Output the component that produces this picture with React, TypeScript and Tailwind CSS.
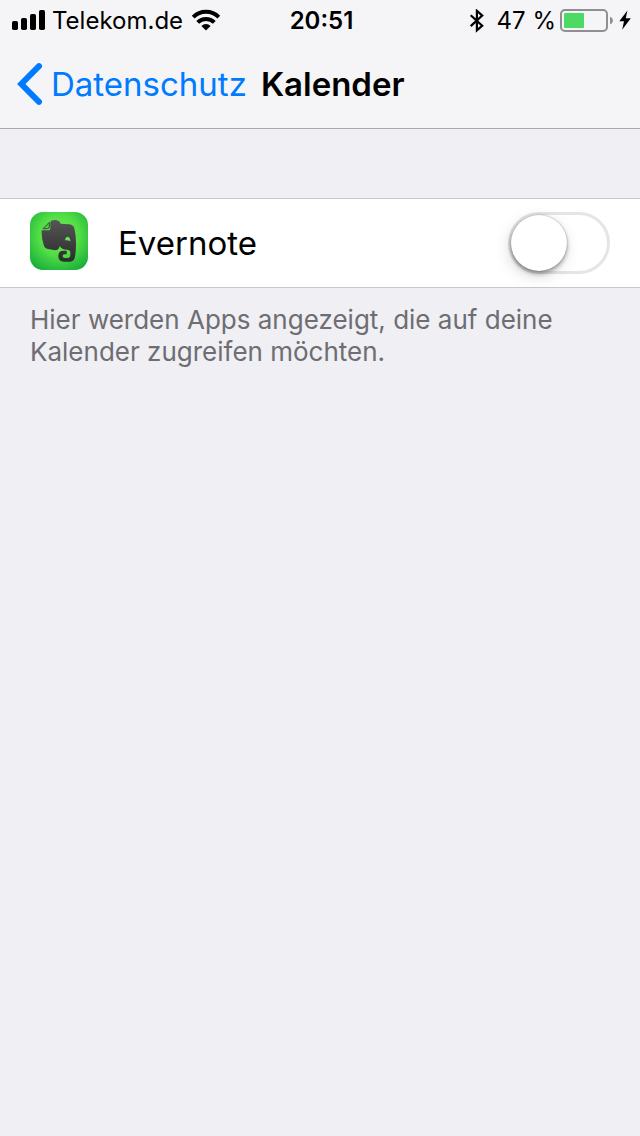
import { useState } from 'react';

function SignalIcon() {
  return (
    <svg aria-hidden="true" className="h-[22px] w-[34px] shrink-0" viewBox="0 0 34 22">
      <rect x="0" y="11" width="6" height="9" rx="1.7" />
      <rect x="9" y="8" width="6" height="12" rx="1.7" />
      <rect x="18" y="4" width="6" height="16" rx="1.7" />
      <rect x="27" y="0" width="6" height="20" rx="1.7" />
    </svg>
  );
}

function WifiIcon() {
  return (
    <svg aria-hidden="true" className="h-[24px] w-[30px] shrink-0" viewBox="0 0 30 24">
      <g fill="none" stroke="#000" strokeWidth="4">
        <path d="M2.2 8.1 A18.2 18.2 0 0 1 27.8 8.1" />
        <path d="M6.7 13.4 A11.7 11.7 0 0 1 23.3 13.4" />
      </g>
      <path d="M10.4 17 A6.3 6.3 0 0 1 19.6 17 L15 21.4 Z" />
    </svg>
  );
}

function BluetoothIcon() {
  return (
    <svg aria-hidden="true" className="h-[24px] w-[16px] shrink-0" viewBox="0 0 16 24">
      <path
        d="M1.7 6.2 L13.2 16.7 L7.9 21.4 V1.8 L13.2 6.6 L1.7 17.1"
        fill="none"
        stroke="#000"
        strokeWidth="2.2"
      />
    </svg>
  );
}

function BatteryIcon() {
  return (
    <svg aria-hidden="true" className="h-[24px] w-[54px] shrink-0" viewBox="0 0 54 24">
      <rect x="1" y="1" width="46" height="21" rx="4" fill="none" stroke="#8e8e93" strokeWidth="2" />
      <rect x="4" y="4" width="20" height="15" rx="1" fill="#4cd964" />
      <path d="M50 7.5 Q53 9 53 11.5 T50 15.5 Z" fill="#8e8e93" />
    </svg>
  );
}

function BoltIcon() {
  return (
    <svg aria-hidden="true" className="h-[22px] w-[12px] shrink-0" viewBox="0 0 12 22">
      <path d="M8.4 0.4 L0.3 11.2 H5 L3.2 19.8 L11.8 8.2 H6.8 Z" />
    </svg>
  );
}

function EvernoteIcon() {
  return (
    <svg aria-hidden="true" className="h-[62px] w-[58px] shrink-0" viewBox="30 36 174 186">
      <defs>
        <radialGradient id="tile" cx="0.5" cy="0.4" r="0.72">
          <stop offset="0" stopColor="#7cee62" />
          <stop offset="0.5" stopColor="#50dc45" />
          <stop offset="1" stopColor="#12a93a" />
        </radialGradient>
        <linearGradient id="head" x1="0" y1="0" x2="0" y2="1">
          <stop offset="0" stopColor="#555" />
          <stop offset="1" stopColor="#2b2b2b" />
        </linearGradient>
      </defs>
      <rect x="30" y="36" width="174" height="174" rx="39" fill="url(#tile)" />
      <path
        d="M69 86 L88 67 V81 Q88 86 83 86 Z"
        fill="#55c447"
        stroke="#33502f"
        strokeWidth="3"
        strokeLinejoin="round"
      />
      <path
        fill="url(#head)"
        d="M65 91 H84 Q91 91 91 83 V65 Q94 60 104 60 Q118 60 122 71 L146 73 Q160 74 163 85 Q168 104 168 130 Q168 160 164 174 Q161 185 149 185 H132 Q115 185 115 168 Q115 152 130 152 H140 V163 H133 Q128 163 128 168 Q128 174 134 174 H145 Q151 174 151 166 V157 Q151 149 141 149 Q124 149 119 138 Q116 151 106 151 L84 147 Q74 145 71 134 Q65 115 65 98 Z"
      />
      <path d="M135 121 Q136 110 143 110 Q151 111 151 124 Q142 119 135 121 Z" fill="#66e455" />
    </svg>
  );
}

function StatusBar() {
  return (
    <div className="grid h-[42px] grid-cols-[1fr_auto_1fr] items-center pl-3 pr-[9px] text-[24px] leading-10">
      <div className="flex items-center">
        <SignalIcon />
        <span className="ml-[6px] mr-2">Telekom.de</span>
        <WifiIcon />
      </div>
      <time className="font-semibold">20:51</time>
      <div className="flex items-center justify-end">
        <BluetoothIcon />
        <span className="ml-3 mr-1 whitespace-nowrap">47 %</span>
        <BatteryIcon />
        <span className="ml-[5px] flex">
          <BoltIcon />
        </span>
      </div>
    </div>
  );
}

export default function App() {
  const [allowed, setAllowed] = useState(false);

  return (
    <div className="min-h-screen bg-[#efeff4] font-['Inter','Liberation_Sans',sans-serif] text-black">
      <header className="border-b border-[#a9a9ac] bg-[#f5f5f7] pb-[2px]">
        <StatusBar />
        <nav className="flex h-[84px] items-center pl-[17px] text-[33px] leading-10">
          <a href="#datenschutz" className="flex items-center gap-2 text-[#007aff]">
            <svg aria-hidden="true" className="h-[42px] w-[26px] shrink-0" viewBox="0 0 26 42">
              <path
                d="M22 3.2 L4.3 21 L22 38.8"
                fill="none"
                stroke="currentColor"
                strokeWidth="6"
                strokeLinecap="round"
                strokeLinejoin="miter"
              />
            </svg>
            Datenschutz
          </a>
          <h1 className="ml-[14px] font-semibold">Kalender</h1>
        </nav>
      </header>

      <main className="pt-[69px]">
        <label className="flex h-[90px] items-center border-y border-[#c8c7cc] bg-white px-[30px]">
          <EvernoteIcon />
          <span className="ml-[30px] flex-1 text-[33px] leading-10">Evernote</span>
          <input
            type="checkbox"
            role="switch"
            className="peer sr-only"
            checked={allowed}
            onChange={(e) => setAllowed(e.target.checked)}
          />
          <span className="flex h-[62px] w-[102px] rounded-full border-3 border-[#e5e5e5] bg-white peer-checked:justify-end peer-checked:border-[#4cd964] peer-checked:bg-[#4cd964]">
            <span className="size-14 rounded-full bg-white shadow-[0_0_2px_rgba(0,0,0,0.35),0_3px_4px_rgba(0,0,0,0.3),-2px_5px_16px_rgba(0,0,0,0.15)]" />
          </span>
        </label>
        <p className="px-[30px] pt-4 text-[26px] leading-8 text-[#6d6d72]">
          Hier werden Apps angezeigt, die auf deine Kalender zugreifen möchten.
        </p>
      </main>
    </div>
  );
}
